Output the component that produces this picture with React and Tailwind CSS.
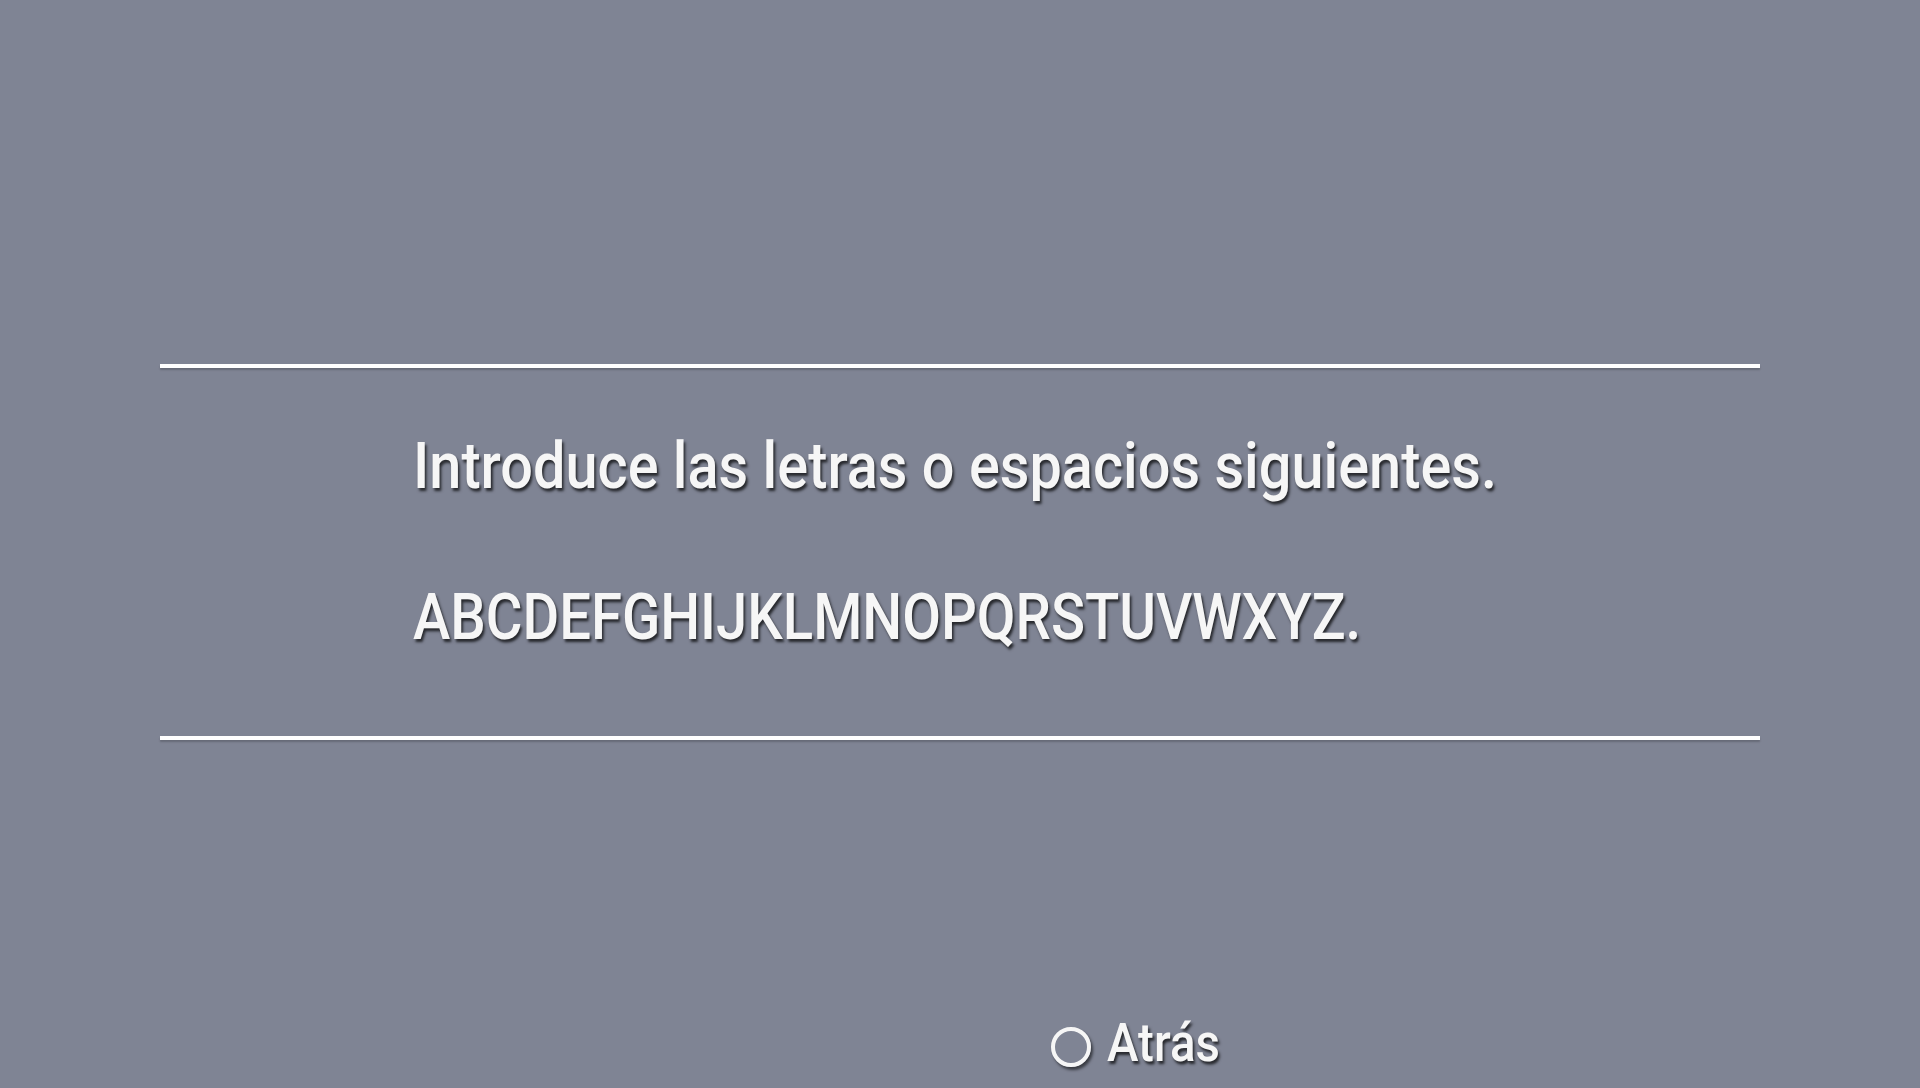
import React from "react";

const shadowText = "[text-shadow:2px_3px_3px_rgba(0,0,0,0.7)]";

const Divider = () => (
  <div className="mx-[160px] h-1 bg-white shadow-[0_2px_2px_rgba(0,0,0,0.2)]" />
);

export default function App() {
  return (
    <div
      className="h-screen w-full overflow-hidden bg-[#7f8494] flex flex-col text-[#f6f6f6]"
      style={{ fontFamily: "Roboto, 'Liberation Sans', sans-serif" }}
    >
      <div className="h-[364px]" />
      <Divider />

      {/* Message */}
      <div className="h-[368px] pl-[413px] pt-[66px] flex flex-col gap-[86px]">
        <p className={`text-[65px] font-medium leading-none origin-left scale-x-[0.887] whitespace-nowrap ${shadowText}`}>
          Introduce las letras o espacios siguientes.
        </p>
        <p className={`text-[65px] font-medium leading-none origin-left scale-x-[0.865] whitespace-nowrap ${shadowText}`}>
          ABCDEFGHIJKLMNOPQRSTUVWXYZ.
        </p>
      </div>

      <Divider />

      {/* Footer */}
      <div className="pt-[276px] pl-[1051px] flex items-center gap-[16px]">
        <div className="w-10 h-10 rounded-full border-[4.5px] border-[#f6f6f6] shadow-[2px_3px_3px_rgba(0,0,0,0.55)] mt-[8px]" />
        <span className={`text-[54px] font-medium leading-none origin-left scale-x-[0.88] ${shadowText}`}>
          Atrás
        </span>
      </div>
    </div>
  );
}
